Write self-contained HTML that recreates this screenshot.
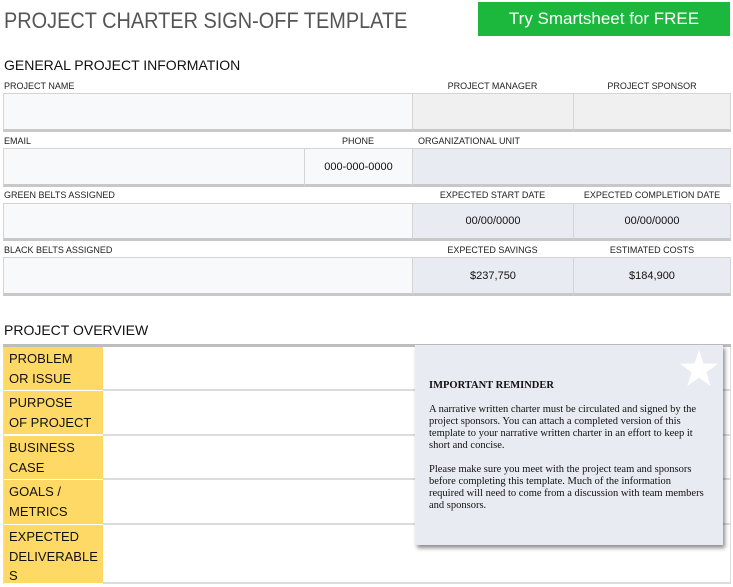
<!DOCTYPE html><html><head><style>
body{margin:0;width:733px;height:587px;background:#fff;font-family:"Liberation Sans",sans-serif;position:relative;overflow:hidden}
.a{position:absolute}
.lb{position:absolute;font-size:9px;color:#222;white-space:nowrap}
.bx{position:absolute;box-sizing:border-box;border:1px solid #d4d4d4;border-bottom:3px solid #c8c8c8;font-size:11px;color:#111;display:flex;align-items:center;justify-content:center}
.w{background:#f8f9fa}.g{background:#f0f0f0}.b{background:#e8ebf1}
.y{position:absolute;left:4px;width:99px;background:#ffd966;font-size:13px;line-height:19.5px;color:#111;padding:2px 0 0 5px;box-sizing:border-box}
.r{position:absolute;left:103px;width:628px;border-bottom:2px solid #dcdcdc;box-sizing:border-box}
</style></head><body>
<div class="a" style="left:4px;top:8px;font-size:22px;color:#555;transform:scaleX(0.905);transform-origin:0 0;white-space:nowrap">PROJECT CHARTER SIGN-OFF TEMPLATE</div>
<div class="a" style="left:478px;top:2px;width:252px;height:34px;background:#1cb83e;color:#fff;font-size:17px;display:flex;align-items:center;justify-content:center">Try Smartsheet for FREE</div>
<div class="a" style="left:4px;top:57px;font-size:14px;color:#111">GENERAL PROJECT INFORMATION</div>

<div class="lb" style="left:4px;top:81px">PROJECT NAME</div>
<div class="lb" style="left:412px;width:161px;text-align:center;top:81px">PROJECT MANAGER</div>
<div class="lb" style="left:573px;width:158px;text-align:center;top:81px">PROJECT SPONSOR</div>
<div class="bx w" style="left:3px;top:93px;width:410px;height:39px"></div>
<div class="bx g" style="left:412px;top:93px;width:162px;height:39px"></div>
<div class="bx g" style="left:573px;top:93px;width:158px;height:39px"></div>

<div class="lb" style="left:4px;top:136px">EMAIL</div>
<div class="lb" style="left:304px;width:108px;text-align:center;top:136px">PHONE</div>
<div class="lb" style="left:418px;top:136px">ORGANIZATIONAL UNIT</div>
<div class="bx w" style="left:3px;top:148px;width:302px;height:39px"></div>
<div class="bx w" style="left:304px;top:148px;width:109px;height:39px">000-000-0000</div>
<div class="bx b" style="left:412px;top:148px;width:319px;height:39px"></div>

<div class="lb" style="left:4px;top:190px">GREEN BELTS ASSIGNED</div>
<div class="lb" style="left:412px;width:161px;text-align:center;top:190px">EXPECTED START DATE</div>
<div class="lb" style="left:573px;width:158px;text-align:center;top:190px">EXPECTED COMPLETION DATE</div>
<div class="bx w" style="left:3px;top:203px;width:410px;height:38px"></div>
<div class="bx b" style="left:412px;top:203px;width:162px;height:38px">00/00/0000</div>
<div class="bx b" style="left:573px;top:203px;width:158px;height:38px">00/00/0000</div>

<div class="lb" style="left:4px;top:245px">BLACK BELTS ASSIGNED</div>
<div class="lb" style="left:412px;width:161px;text-align:center;top:245px">EXPECTED SAVINGS</div>
<div class="lb" style="left:573px;width:158px;text-align:center;top:245px">ESTIMATED COSTS</div>
<div class="bx w" style="left:3px;top:257px;width:410px;height:39px"></div>
<div class="bx b" style="left:412px;top:257px;width:162px;height:39px">$237,750</div>
<div class="bx b" style="left:573px;top:257px;width:158px;height:39px">$184,900</div>

<div class="a" style="left:4px;top:322px;font-size:14px;color:#111">PROJECT OVERVIEW</div>
<div class="a" style="left:3px;top:344px;width:728px;height:3px;background:#bdbdbd"></div>
<div class="a" style="left:3px;top:347px;width:1px;height:237px;background:#ddd"></div>
<div class="a" style="left:730px;top:347px;width:1px;height:237px;background:#ddd"></div>
<div class="y" style="top:347px;height:43px">PROBLEM<br>OR ISSUE</div>
<div class="y" style="top:391px;height:43px">PURPOSE<br>OF PROJECT</div>
<div class="y" style="top:436px;height:43px">BUSINESS<br>CASE</div>
<div class="y" style="top:480px;height:44px">GOALS /<br>METRICS</div>
<div class="y" style="top:525px;height:58px">EXPECTED<br>DELIVERABLE<br>S</div>
<div class="r" style="top:347px;height:44px"></div>
<div class="r" style="top:391px;height:45px"></div>
<div class="r" style="top:436px;height:44px"></div>
<div class="r" style="top:480px;height:45px"></div>
<div class="r" style="top:525px;height:59px"></div>

<div class="a" style="left:415px;top:345px;width:308px;height:200px;background:#e8ebf1;box-shadow:2px 3px 4px rgba(0,0,0,0.45);font-family:'Liberation Serif',serif;font-size:10.5px;line-height:12px;color:#111;box-sizing:border-box;padding:35px 18px 0 14px">
<svg style="position:absolute;right:5px;top:5px" width="38" height="36" viewBox="0 0 38 36"><polygon points="19,0 23.5,13.5 38,13.7 26.4,22.3 30.7,36 19,27.8 7.3,36 11.6,22.3 0,13.7 14.5,13.5" fill="#fff"/></svg>
<div style="font-weight:bold;margin-bottom:12px">IMPORTANT REMINDER</div>
<div>A narrative written charter must be circulated and signed by the project sponsors. You can attach a completed version of this template to your narrative written charter in an effort to keep it short and concise.</div>
<div style="margin-top:12px">Please make sure you meet with the project team and sponsors before completing this template. Much of the information required will need to come from a discussion with team members and sponsors.</div>
</div>
</body></html>
